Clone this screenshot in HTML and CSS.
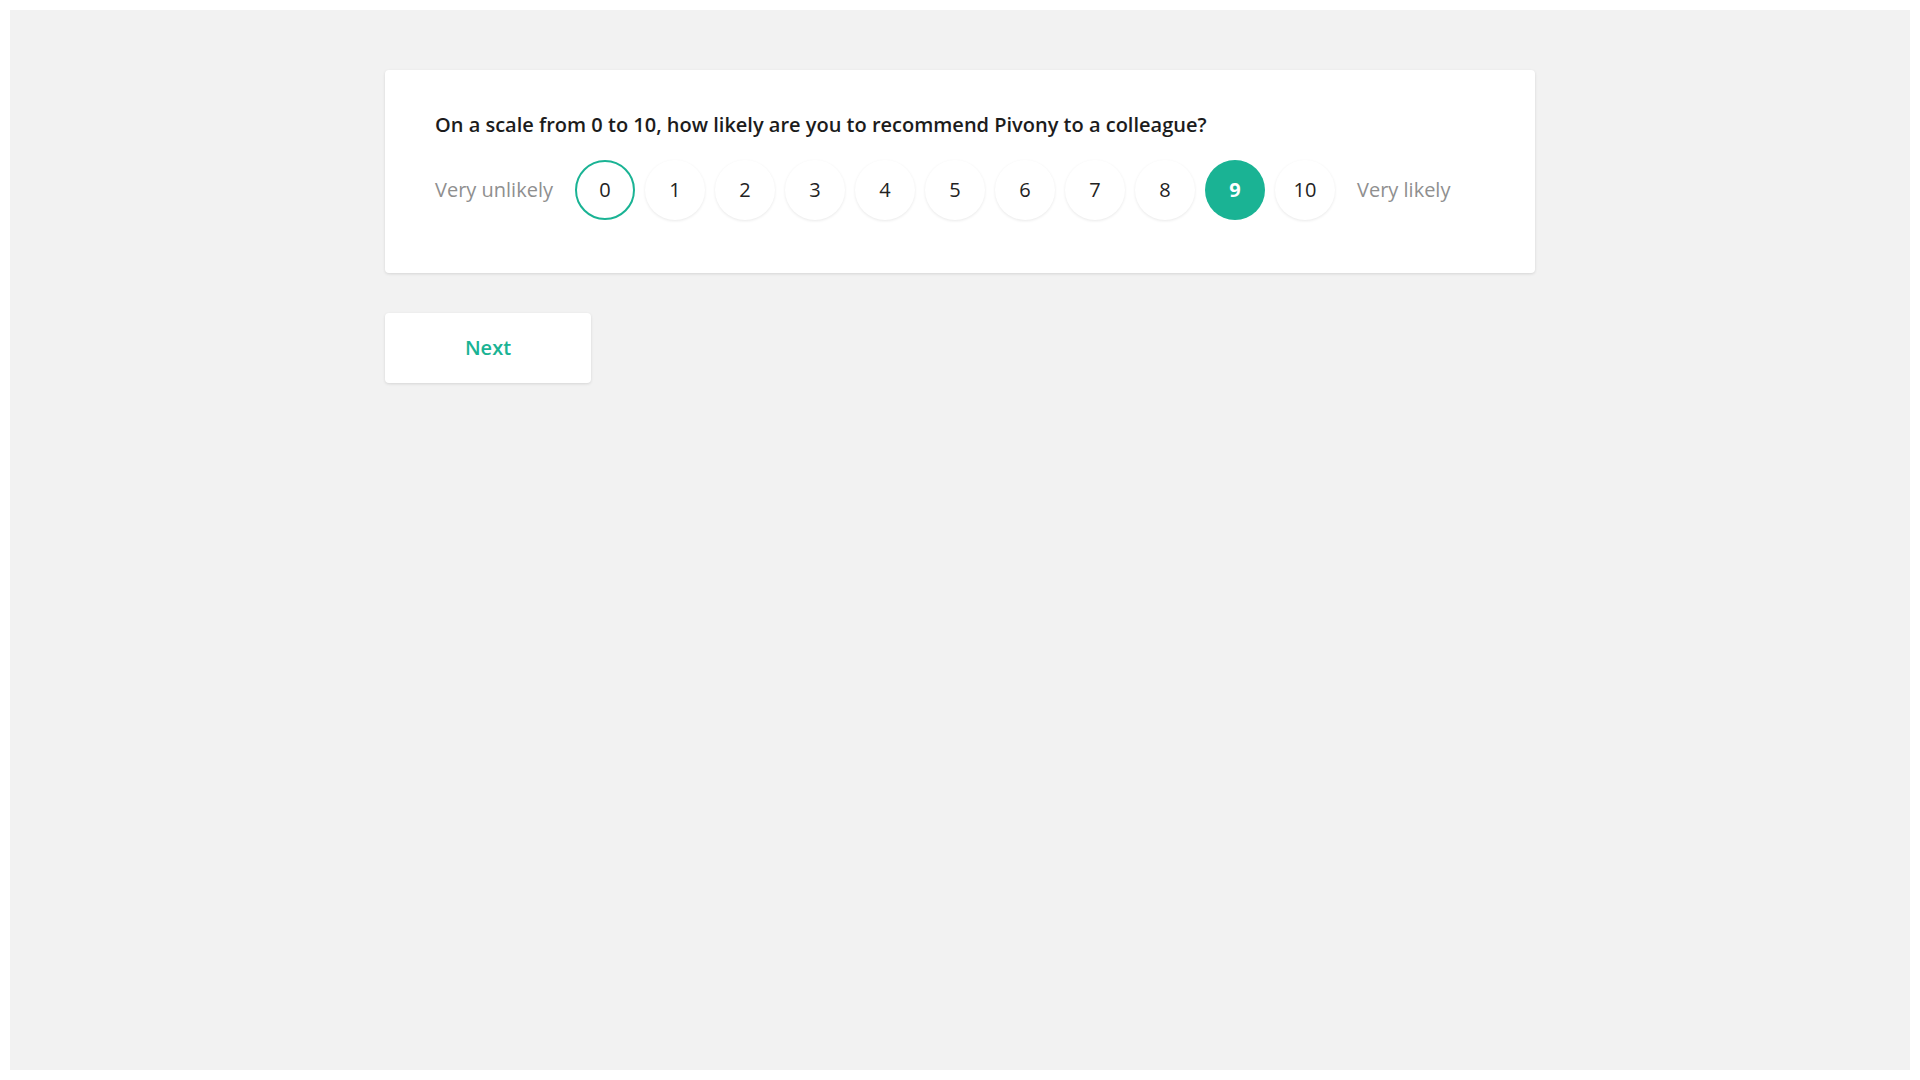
FILE: index.html
```html
<!DOCTYPE html>
<html lang="en">
<head>
<meta charset="utf-8">
<title>Survey</title>
<link rel="stylesheet" href="styles.css">
</head>
<body>
<main class="page">
  <div class="wrap">
    <section class="card">
      <h2 class="question">On a scale from 0 to 10, how likely are you to recommend Pivony to a colleague?</h2>
      <div class="scale">
        <span class="label">Very unlikely</span>
        <div class="options">
          <button class="opt opt-outline">0</button>
          <button class="opt">1</button>
          <button class="opt">2</button>
          <button class="opt">3</button>
          <button class="opt">4</button>
          <button class="opt">5</button>
          <button class="opt">6</button>
          <button class="opt">7</button>
          <button class="opt">8</button>
          <button class="opt opt-selected">9</button>
          <button class="opt">10</button>
        </div>
        <span class="label">Very likely</span>
      </div>
    </section>
    <button class="next">Next</button>
  </div>
</main>
</body>
</html>
```
FILE: styles.css
```css
html, body {
  margin: 0;
  padding: 0;
  background: #ffffff;
}
body {
  padding: 10px;
  font-family: "Open Sans", "Noto Sans", sans-serif;
}
.page {
  background: #f2f2f2;
  height: 1060px;
  display: flex;
  justify-content: center;
}
.wrap {
  width: 1150px;
  padding-top: 60px;
  display: flex;
  flex-direction: column;
  align-items: flex-start;
  gap: 40px;
}
.card {
  box-sizing: border-box;
  width: 1150px;
  height: 203px;
  background: #fff;
  border-radius: 4px;
  box-shadow: 0 1px 3px rgba(0,0,0,0.12);
  padding: 41px 50px 0 50px;
}
.question {
  margin: 0;
  font-size: 20px;
  font-weight: 600;
  color: #1c1c1c;
  line-height: 27px;
}
.scale {
  margin-top: 22px;
  display: flex;
  align-items: center;
}
.label {
  font-size: 20px;
  color: #8f8f8f;
  line-height: 27px;
  padding-bottom: 1px;
}
.options {
  display: flex;
  gap: 10px;
  margin: 0 22px;
}
.opt {
  box-sizing: border-box;
  width: 60px;
  height: 60px;
  border-radius: 50%;
  border: none;
  background: #fff;
  box-shadow: 0 1px 3px rgba(0,0,0,0.09);
  font-family: "Open Sans", "Noto Sans", sans-serif;
  font-size: 20px;
  color: #222;
  padding: 0 0 1px 0;
  cursor: pointer;
}
.opt-outline {
  border: 2px solid #1ab394;
  box-shadow: none;
}
.opt-selected {
  background: #1ab394;
  color: #fff;
  font-weight: 700;
  box-shadow: none;
}
.next {
  width: 206px;
  height: 70px;
  background: #fff;
  border: none;
  border-radius: 4px;
  box-shadow: 0 1px 3px rgba(0,0,0,0.12);
  font-family: "Open Sans", "Noto Sans", sans-serif;
  font-size: 20px;
  font-weight: 600;
  color: #1ab394;
  padding: 0 0 1px 0;
  cursor: pointer;
}
```
